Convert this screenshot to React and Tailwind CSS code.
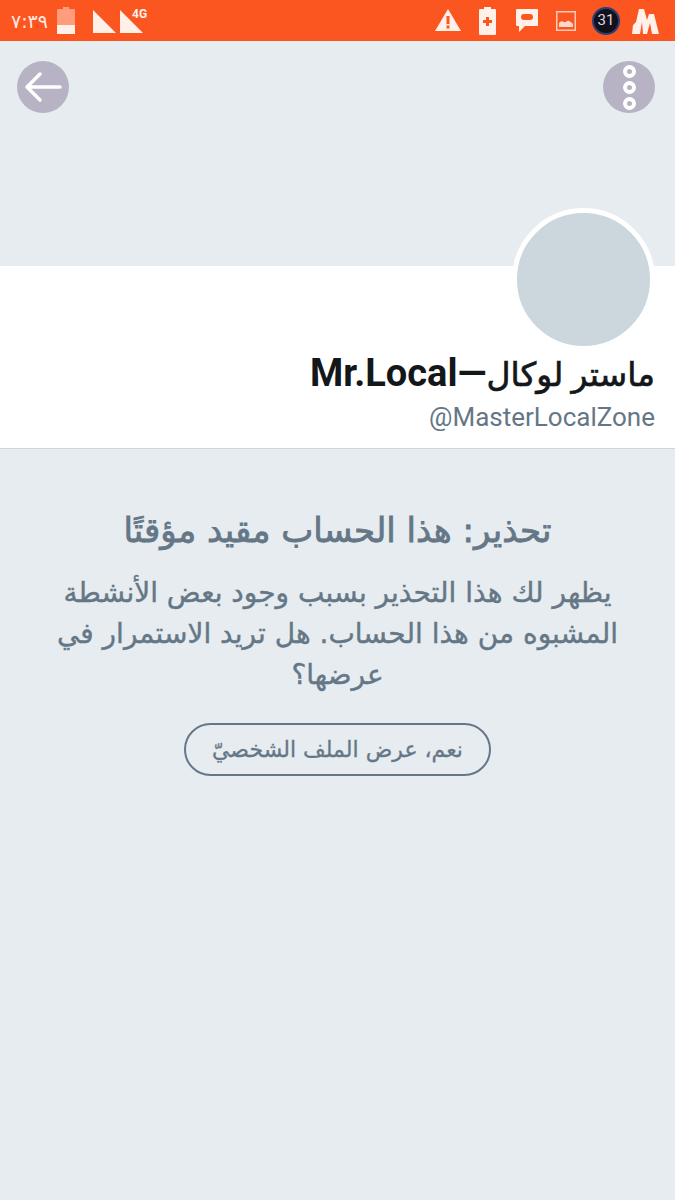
import React from "react";

const StatusLeft = () => (
  <div className="flex items-center">
    <span className="ml-[11px] w-[35px] text-[19px] leading-[24px] text-[#ffe9e0] font-['DejaVu_Sans',sans-serif]">
      ۷:۳۹
    </span>
    <svg width="18" height="27" viewBox="0 0 18 27" className="ml-[11px]">
      <path d="M6 0h6v2h5a1 1 0 0 1 1 1v24H0V3a1 1 0 0 1 1-1h5z" fill="#fe9c7c" />
      <rect y="18" width="18" height="9" fill="#fff0ea" />
    </svg>
    <svg width="23" height="23" viewBox="0 0 23 23" className="ml-[18px] mt-[1px]">
      <path d="M0 0L23 23H0z" fill="#fff0ea" />
    </svg>
    <div className="relative ml-[4px] mt-[1px]">
      <svg width="23" height="23" viewBox="0 0 23 23">
        <path d="M0 0L23 23H0z" fill="#fff0ea" />
      </svg>
      <span className="absolute left-[12px] top-[-3px] text-[12px] leading-[14px] font-bold text-[#fff0ea] font-['Roboto',sans-serif]">
        4G
      </span>
    </div>
  </div>
);

const StatusRight = () => (
  <div className="flex items-center">
    <svg width="26" height="23" viewBox="0 0 26 23">
      <path d="M13 0L26 22H0z" fill="#fff0ea" />
      <rect x="11.5" y="7" width="3" height="8" fill="#fc5620" />
      <rect x="11.5" y="16.5" width="3" height="3" fill="#fc5620" />
    </svg>
    <svg width="17" height="28" viewBox="0 0 17 28" className="ml-[18px]">
      <path d="M5 0h7v2h4a1 1 0 0 1 1 1v24a1 1 0 0 1-1 1H1a1 1 0 0 1-1-1V3a1 1 0 0 1 1-1h4z" fill="#fff0ea" />
      <path d="M7 10h3v3h3v3h-3v3H7v-3H4v-3h3z" fill="#fc5620" />
    </svg>
    <svg width="22" height="23" viewBox="0 0 22 23" className="ml-[20px]">
      <path d="M1 0h20a1 1 0 0 1 1 1v15a1 1 0 0 1-1 1H9l-6 6v-6H1a1 1 0 0 1-1-1V1a1 1 0 0 1 1-1z" fill="#fff0ea" />
      <rect x="5" y="5" width="12" height="6" rx="3" fill="#fc5620" />
    </svg>
    <svg width="20" height="20" viewBox="0 0 20 20" className="ml-[18px]">
      <rect x="0.75" y="0.75" width="18.5" height="18.5" fill="none" stroke="#fff0ea" strokeOpacity="0.75" strokeWidth="1.5" />
      <path d="M3 16v-4c2-2 3-2 5-1s3-2 5-1 3 2 4 3v3z" fill="#fff0ea" fillOpacity="0.85" />
    </svg>
    <div className="ml-[16px] flex h-[28px] w-[28px] items-center justify-center rounded-full border-[2px] border-[#2b3f78] bg-[#14101a] text-[15px] text-[#d8d8e0] font-['Roboto',sans-serif]">
      31
    </div>
    <svg width="27" height="26" viewBox="0 0 27 26" className="ml-[12px]">
      <path d="M0 26L1 17 4 14 7 1h5l3 11 2-6h5l5 20h-7l-2-11-3 11h-4L10 14 8 26z" fill="#fff0ea" />
    </svg>
  </div>
);

const RoundButton = ({ children }) => (
  <button type="button" className="flex h-[52px] w-[52px] items-center justify-center rounded-full bg-[#b7b3c4]">
    {children}
  </button>
);

export default function App() {
  return (
    <div className="flex min-h-[1200px] w-[675px] flex-col bg-[#e6ecf0] font-['DejaVu_Sans',sans-serif]">
      <div className="flex h-[41px] items-center justify-between bg-[#fb5520] pr-[16px]">
        <StatusLeft />
        <StatusRight />
      </div>

      <div className="flex h-[225px] items-start justify-between pl-[17px] pr-[20px] pt-[20px]">
        <RoundButton>
          <svg width="38" height="32" viewBox="0 0 38 32" fill="none" stroke="#fff" strokeWidth="3.5" strokeLinecap="round" strokeLinejoin="round">
            <path d="M36 16H3M16 3L3 16l13 13" />
          </svg>
        </RoundButton>
        <RoundButton>
          <div className="flex flex-col gap-[3px]">
            <span className="h-[13px] w-[13px] rounded-full border-[4px] border-white" />
            <span className="h-[13px] w-[13px] rounded-full border-[4px] border-white" />
            <span className="h-[13px] w-[13px] rounded-full border-[4px] border-white" />
          </div>
        </RoundButton>
      </div>

      <div className="flex h-[183px] flex-col items-end border-b border-[#ccd6dd] bg-white pr-[20px]">
        <div className="mt-[-58px] h-[143px] w-[143px] rounded-full border-[5px] border-white bg-[#ccd6dd]" />
        <h1 className="mt-[-1px] text-[38px] leading-[47px] font-bold whitespace-nowrap text-[#14171a] font-['Roboto','DejaVu_Sans',sans-serif]" dir="rtl">
          <span className="text-[33px] font-normal [-webkit-text-stroke:0.7px_#14171a]">ماستر لوكال</span>
          —
          <span>Mr.Local</span>
        </h1>
        <p className="mt-[3px] text-[26px] leading-[32px] text-[#657786] font-['Roboto',sans-serif]">@MasterLocalZone</p>
      </div>

      <div className="flex flex-col items-center px-[36px] pt-[59px] text-center text-[#657786]" dir="rtl">
        <h2 className="text-[34px] leading-[44px] font-normal [-webkit-text-stroke:0.8px_#657786]">تحذير: هذا الحساب مقيد مؤقتًا</h2>
        <p className="mt-[20px] text-[28px] leading-[41px] [-webkit-text-stroke:0.4px_#657786]">
          يظهر لك هذا التحذير بسبب وجود بعض الأنشطة المشبوه من هذا الحساب. هل تريد الاستمرار في عرضها؟
        </p>
        <button type="button" className="mt-[28px] flex h-[53px] w-[307px] items-center justify-center rounded-full border-[2px] border-[#657786] text-[22px] text-[#657786] [-webkit-text-stroke:0.3px_#657786]">
          نعم، عرض الملف الشخصيّ
        </button>
      </div>
    </div>
  );
}
